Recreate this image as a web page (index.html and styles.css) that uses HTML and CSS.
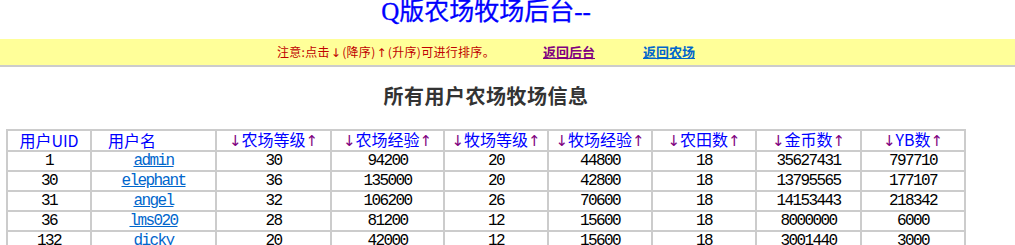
FILE: index.html
```html
<!DOCTYPE html>
<html lang="zh-CN">
<head>
<meta charset="utf-8">
<title>Q版农场牧场后台</title>
<link rel="stylesheet" href="styles.css">
</head>
<body>
<div class="page">
  <h1 class="title">Q版农场牧场后台--</h1>
</div>
<div class="bar">
  <div class="page bar-inner">
    <span class="notice">注意:点击<span class="ar">↓</span>(降序)<span class="ar">↑</span>(升序)可进行排序。</span>
    <a class="back visited" href="#">返回后台</a>
    <a class="back" href="#">返回农场</a>
  </div>
</div>
<div class="page">
  <h2 class="subtitle">所有用户农场牧场信息</h2>
  <table class="grid">
    <thead>
      <tr>
        <th>用户UID</th>
        <th class="c-name">用户名</th>
        <th><a class="arr" href="#">↓</a><span class="hd">农场等级</span><a class="arr" href="#">↑</a></th>
        <th><a class="arr" href="#">↓</a><span class="hd">农场经验</span><a class="arr" href="#">↑</a></th>
        <th><a class="arr" href="#">↓</a><span class="hd">牧场等级</span><a class="arr" href="#">↑</a></th>
        <th><a class="arr" href="#">↓</a><span class="hd">牧场经验</span><a class="arr" href="#">↑</a></th>
        <th><a class="arr" href="#">↓</a><span class="hd">农田数</span><a class="arr" href="#">↑</a></th>
        <th><a class="arr" href="#">↓</a><span class="hd">金币数</span><a class="arr" href="#">↑</a></th>
        <th><a class="arr" href="#">↓</a><span class="hd">YB数</span><a class="arr" href="#">↑</a></th>
      </tr>
    </thead>
    <tbody>
      <tr><td>1</td><td><a class="user" href="#">admin</a></td><td>30</td><td>94200</td><td>20</td><td>44800</td><td>18</td><td>35627431</td><td>797710</td></tr>
      <tr><td>30</td><td><a class="user" href="#">elephant</a></td><td>36</td><td>135000</td><td>20</td><td>42800</td><td>18</td><td>13795565</td><td>177107</td></tr>
      <tr><td>31</td><td><a class="user" href="#">angel</a></td><td>32</td><td>106200</td><td>26</td><td>70600</td><td>18</td><td>14153443</td><td>218342</td></tr>
      <tr><td>36</td><td><a class="user" href="#">lms020</a></td><td>28</td><td>81200</td><td>12</td><td>15600</td><td>18</td><td>8000000</td><td>6000</td></tr>
      <tr><td>132</td><td><a class="user" href="#">dicky</a></td><td>20</td><td>42000</td><td>12</td><td>15600</td><td>18</td><td>3001440</td><td>3000</td></tr>
    </tbody>
  </table>
</div>
</body>
</html>
```

FILE: styles.css
```css
body {
  margin: 0;
  background: #ffffff;
  font-family: "Noto Sans CJK SC", sans-serif;
}

.page {
  width: 960px;
  margin-left: 6px;
}

.title {
  margin: 0 0 15px;
  height: 24px;
  font-size: 25px;
  line-height: 24px;
  font-weight: normal;
  color: #0000ff;
  text-align: center;
  font-family: "Liberation Serif", "Noto Sans CJK SC", serif;
  -webkit-text-stroke: 0.3px #0000ff;
}

.bar {
  background: #ffff99;
  border-bottom: 2px solid #cccccc;
  height: 26px;
}

.bar-inner {
  display: flex;
  justify-content: center;
  align-items: center;
  gap: 48px;
  height: 26px;
  font-size: 12px;
  line-height: 14px;
}

.notice {
  color: #c00000;
  letter-spacing: 0.3px;
}

.ar {
  font-family: "DejaVu Sans", sans-serif;
  padding: 0 1px;
}

.back {
  font-size: 13px;
  font-weight: bold;
  color: #0066cc;
  text-decoration: underline;
}

.back.visited {
  color: #800080;
}

.subtitle {
  margin: 19px 0 23px;
  font-size: 20px;
  line-height: 20px;
  font-weight: bold;
  color: #333333;
  text-align: center;
  letter-spacing: 0.5px;
}

.grid {
  width: 960px;
  table-layout: fixed;
  border-collapse: separate;
  border-spacing: 0;
  border-left: 2px solid #cccccc;
  border-top: 2px solid #cccccc;
}

.grid th,
.grid td {
  box-sizing: border-box;
  padding: 0;
  border-right: 2px solid #cccccc;
  border-bottom: 2px solid #cccccc;
  text-align: center;
  white-space: nowrap;
}

.grid th {
  height: 19px;
  font-size: 16px;
  line-height: 17px;
  font-weight: normal;
  color: #0000ff;
}

.grid th:nth-child(1) { width: 84px; }
.grid th:nth-child(2) { width: 125px; }
.grid th:nth-child(3) { width: 115px; }
.grid th:nth-child(4) { width: 113px; }
.grid th:nth-child(5) { width: 104px; }
.grid th:nth-child(6) { width: 104px; }
.grid th:nth-child(7) { width: 104px; }
.grid th:nth-child(8) { width: 105px; }
.grid th:nth-child(9) { width: 104px; }

.grid th.c-name {
  text-align: left;
  padding-left: 16px;
}

.arr {
  font-family: "DejaVu Sans", sans-serif;
  font-size: 15px;
  color: #800080;
  text-decoration: none;
}

.hd {
  color: #0000ff;
}

.grid td {
  height: 20px;
  font-family: "Liberation Mono", monospace;
  font-size: 16px;
  letter-spacing: -1.6px;
  line-height: 18px;
  color: #000000;
}

.user {
  color: #0066cc;
  text-decoration: underline;
}
```
